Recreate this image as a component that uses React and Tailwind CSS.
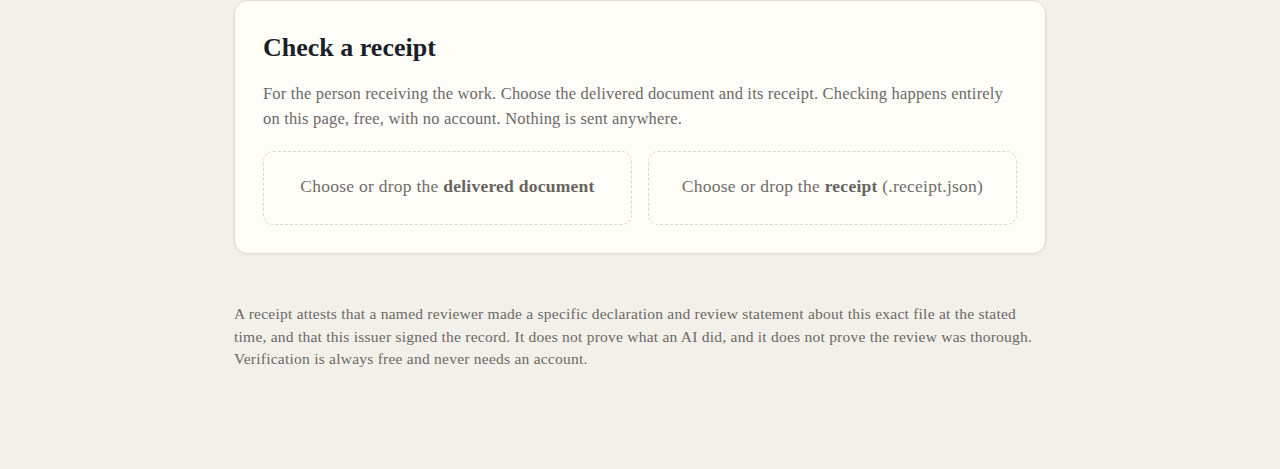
export default function App() {
  const serif = { fontFamily: '"Liberation Serif", "DejaVu Serif", serif' };
  return (
    <div className="min-h-[469px] w-full bg-[#f3efe9]" style={serif}>
      <div className="mx-auto w-[812px] pt-0">
        <div className="mt-0 rounded-[14px] border border-[#e4dfd6] bg-[#fffdf7] px-[28px] pt-[30px] pb-[28px] shadow-[0_1px_3px_rgba(0,0,0,0.06)]">
          <h1 className="text-[26px] font-bold leading-[34px] text-[#1b1f2a]">Check a receipt</h1>
          <p className="mt-[16px] text-[16.5px] leading-[25px] tracking-[0.18px] text-[#6b6966]">
            For the person receiving the work. Choose the delivered document and its receipt. Checking happens entirely on this page, free, with no account. Nothing is sent anywhere.
          </p>
          <div className="mt-[20px] grid grid-cols-2 gap-[16px]">
            <div className="flex h-[74px] items-center justify-center rounded-[10px] border border-dashed border-[#dcd8d0] pb-[4px] text-[17.5px] tracking-[0.25px] text-[#6f6d6a]">
              <span>Choose or drop the <b className="font-bold text-[#66645f]">delivered document</b></span>
            </div>
            <div className="flex h-[74px] items-center justify-center rounded-[10px] border border-dashed border-[#dcd8d0] pb-[4px] text-[17.5px] tracking-[0.25px] text-[#6f6d6a]">
              <span>Choose or drop the <b className="font-bold text-[#66645f]">receipt</b> (.receipt.json)</span>
            </div>
          </div>
        </div>
        <p className="mt-[49px] text-[15.5px] leading-[22.5px] tracking-[0.24px] text-[#6b6966]">
          A receipt attests that a named reviewer made a specific declaration and review statement about this exact file at the stated time, and that this issuer signed the record. It does not prove what an AI did, and it does not prove the review was thorough. Verification is always free and never needs an account.
        </p>
      </div>
    </div>
  );
}
